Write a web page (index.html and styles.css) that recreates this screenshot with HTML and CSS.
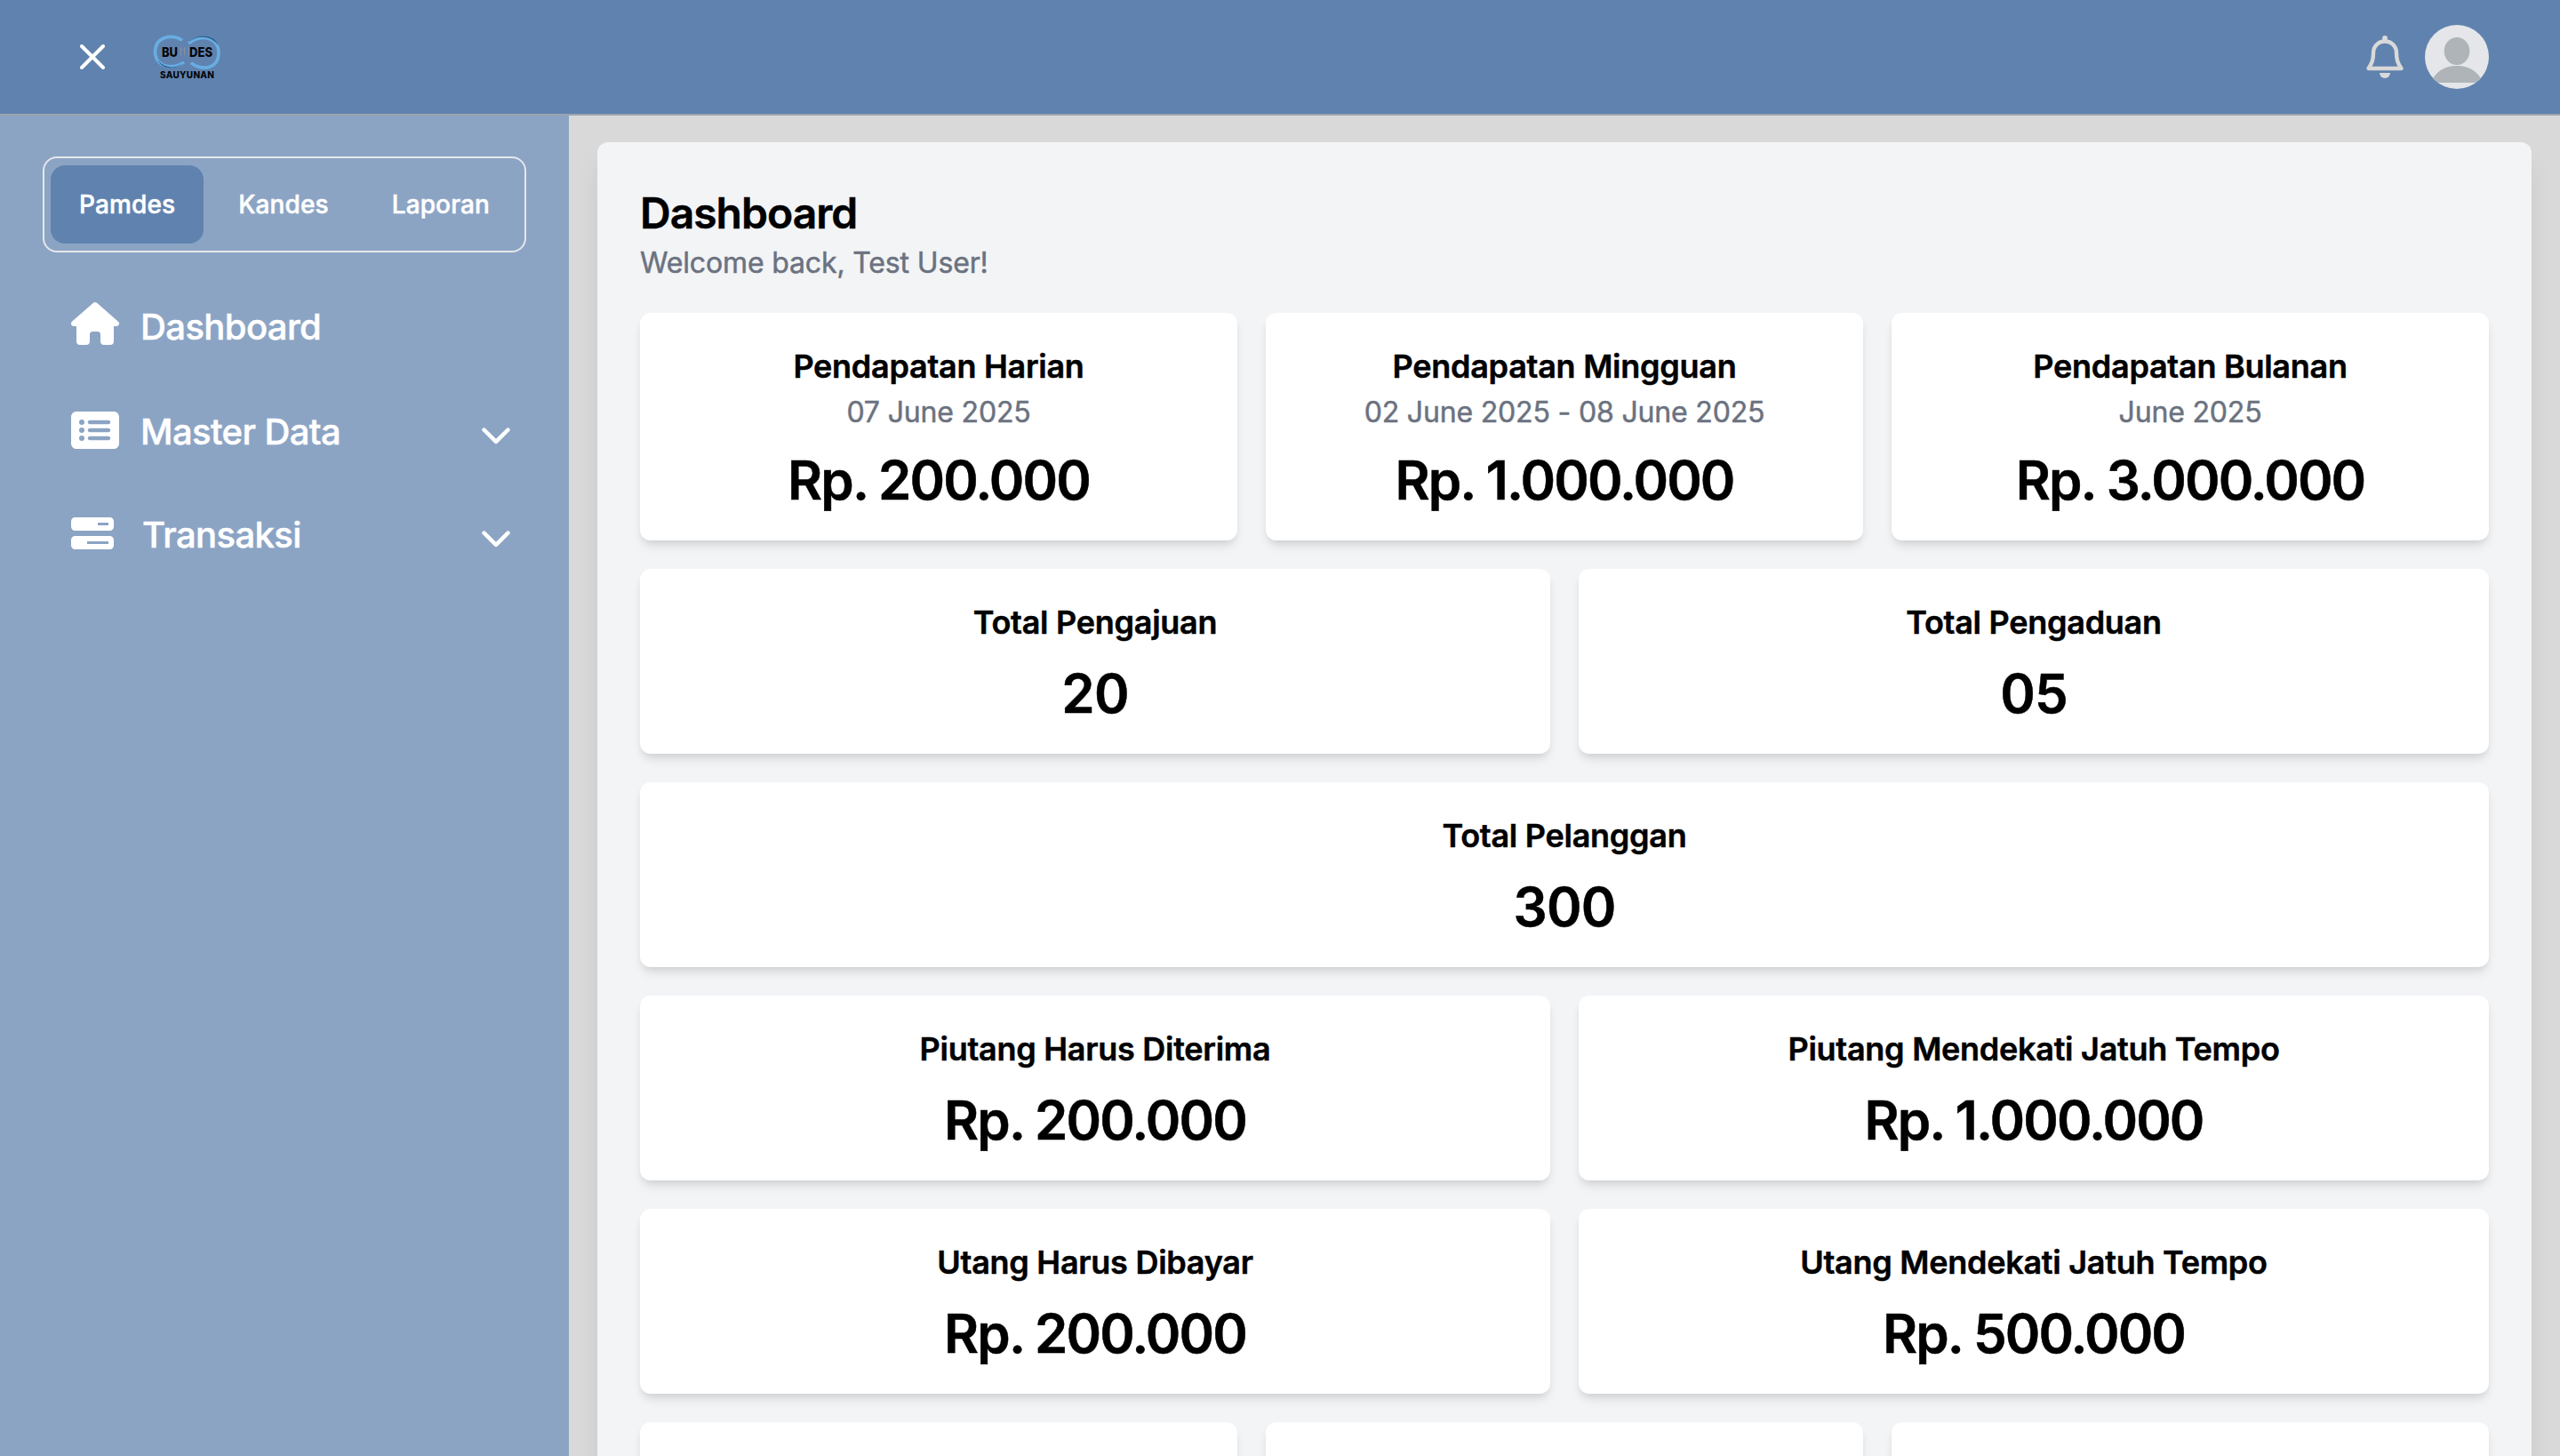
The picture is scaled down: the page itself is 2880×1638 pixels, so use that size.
FILE: index.html
```html
<!DOCTYPE html>
<html lang="id">
<head>
  <meta charset="UTF-8">
  <meta name="viewport" content="width=device-width, initial-scale=1.0">
  <title>Dashboard - Pamdes</title>
  <link rel="stylesheet" href="styles.css">
</head>
<body>
  <header class="navbar">
    <div class="navbar-left">
      <button class="close-button" aria-label="Close sidebar">
        <svg viewBox="0 0 28 28"><path d="M2 2l24 24M26 2L2 26"/></svg>
      </button>
      <svg class="logo" viewBox="0 -2.4 80 54">
        <path d="M33 6C24-1 2.500 0 2.500 19c0 10 8 16.500 17 16.500 7 0 12-2.500 15.500-5" fill="none" stroke="#69ade2" stroke-width="3.600"/>
        <path d="M5 27c6 10 21 13 31.500 2C28 39 11 41 5 27z" fill="#2c608f"/>
        <path d="M43 31c9 9 31 9 31-12 0-9-8-16-17-16-7 0-12 2.500-17 6.500" fill="none" stroke="#69ade2" stroke-width="3.600"/>
        <path d="M40 8C48-1 68-3 74 12 65 0 50 0 40 8z" fill="#2c608f"/>
        <path d="M31.500 14v9M35.500 14v9M40.500 14v9M30 14l3 3M37 14l-3 3M39 15l3 3" stroke="#8790a0" stroke-width="1" fill="none"/>
        <text class="logo-text" x="10" y="25" textLength="18" lengthAdjust="spacingAndGlyphs">BU</text>
        <text class="logo-text" x="41" y="25" textLength="26" lengthAdjust="spacingAndGlyphs">DES</text>
        <text class="logo-subtext" x="8" y="48.900" textLength="61">SAUYUNAN</text>
      </svg>
    </div>
    <div class="navbar-right">
      <svg class="bell" viewBox="0 0 48 48">
        <path d="M24 6.500c-7.500 0-13 5.500-13 13 0 8-1.500 11.500-5.500 17.500h37c-4-6-5.500-9.500-5.500-17.500 0-7.500-5.500-13-13-13z" fill="none" stroke="#d9d9d9" stroke-width="4.400" stroke-linejoin="round"/>
        <circle cx="24" cy="3" r="3" fill="#d9d9d9"/>
        <path d="M18 42h12a6 6 0 0 1-12 0z" fill="#d9d9d9"/>
      </svg>
      <svg class="avatar" viewBox="0 0 72 72">
        <clipPath id="avatar-clip"><circle cx="36" cy="36" r="36"/></clipPath>
        <g clip-path="url(#avatar-clip)">
          <rect width="72" height="72" fill="#e4e6e9"/>
          <ellipse cx="36" cy="29.500" rx="14.300" ry="15.500" fill="#aeb4b7"/>
          <path d="M7 65C11 53 22 46 36 46s25 7 29 19z" fill="#aeb4b7"/>
        </g>
      </svg>
    </div>
  </header>

  <div class="layout">
    <aside class="sidebar">
      <div class="tabs">
        <button class="tab active">Pamdes</button>
        <button class="tab">Kandes</button>
        <button class="tab">Laporan</button>
      </div>
      <nav class="menu">
        <a class="menu-item menu-home">
          <svg class="menu-icon" viewBox="0 0 576 512"><path d="M575.8 255.5c0 18-15 32.1-32 32.1h-32l.7 160.2c0 2.7-.2 5.400-.5 8.100V472c0 22.100-17.900 40-40 40H392c-22.100 0-40-17.900-40-40v-88c0-17.700-14.300-32-32-32h-64c-17.700 0-32 14.300-32 32v88c0 22.100-17.900 40-40 40h-80c-22.100 0-40-17.900-40-40V287.600H32c-18 0-32-14-32-32.100 0-9 3-17 10-24L266.400 8c7-7 15-8 22-8s15 2 21 7l255.400 224.500c8 7 12 15 11 24z"/></svg>
          <span>Dashboard</span>
        </a>
        <a class="menu-item">
          <svg class="menu-icon" viewBox="0 0 576 512"><path fill-rule="evenodd" d="M64 32h448c35.300 0 64 28.700 64 64v320c0 35.300-28.700 64-64 64H64c-35.300 0-64-28.700-64-64V96c0-35.300 28.700-64 64-64zm64 256a32 32 0 1 0 0-64 32 32 0 1 0 0 64zm32-128a32 32 0 1 0-64 0 32 32 0 1 0 64 0zm-32 224a32 32 0 1 0 0-64 32 32 0 1 0 0 64zm96-248c-13.300 0-24 10.700-24 24s10.700 24 24 24h224c13.300 0 24-10.700 24-24s-10.700-24-24-24zm0 96c-13.300 0-24 10.700-24 24s10.700 24 24 24h224c13.300 0 24-10.700 24-24s-10.700-24-24-24zm0 96c-13.300 0-24 10.700-24 24s10.700 24 24 24h224c13.300 0 24-10.700 24-24s-10.700-24-24-24z"/></svg>
          <span>Master Data</span>
          <svg class="chevron" viewBox="0 0 512 512"><path d="M233.400 406.600c12.500 12.500 32.800 12.500 45.300 0l192-192c12.500-12.500 12.500-32.800 0-45.300s-32.800-12.500-45.300 0L256 338.700 86.600 169.400c-12.500-12.500-32.800-12.500-45.300 0s-12.500 32.800 0 45.300l192 192z"/></svg>
        </a>
        <a class="menu-item">
          <svg class="menu-icon icon-square" viewBox="0 0 512 512"><path fill-rule="evenodd" d="M448 160H320v-32h128v32zM48 64C21.500 64 0 85.500 0 112v64c0 26.500 21.500 48 48 48h416c26.500 0 48-21.500 48-48v-64c0-26.500-21.500-48-48-48H48zm400 288v32H192v-32h256zM48 288c-26.500 0-48 21.500-48 48v64c0 26.500 21.500 48 48 48h416c26.500 0 48-21.500 48-48v-64c0-26.500-21.500-48-48-48H48z"/></svg>
          <span>Transaksi</span>
          <svg class="chevron" viewBox="0 0 512 512"><path d="M233.400 406.600c12.500 12.500 32.800 12.500 45.300 0l192-192c12.500-12.500 12.500-32.800 0-45.300s-32.800-12.500-45.300 0L256 338.700 86.600 169.400c-12.500-12.500-32.800-12.500-45.300 0s-12.500 32.800 0 45.300l192 192z"/></svg>
        </a>
      </nav>
    </aside>

    <main class="content">
      <div class="panel">
        <div class="panel-header">
          <h1>Dashboard</h1>
          <p>Welcome back, Test User!</p>
        </div>

        <div class="row">
          <div class="card">
            <h2>Pendapatan Harian</h2>
            <p class="date">07 June 2025</p>
            <p class="value">Rp. 200.000</p>
          </div>
          <div class="card">
            <h2>Pendapatan Mingguan</h2>
            <p class="date">02 June 2025 - 08 June 2025</p>
            <p class="value">Rp. 1.000.000</p>
          </div>
          <div class="card">
            <h2>Pendapatan Bulanan</h2>
            <p class="date">June 2025</p>
            <p class="value">Rp. 3.000.000</p>
          </div>
        </div>

        <div class="row">
          <div class="card">
            <h2>Total Pengajuan</h2>
            <p class="value count">20</p>
          </div>
          <div class="card">
            <h2>Total Pengaduan</h2>
            <p class="value count">05</p>
          </div>
        </div>

        <div class="row">
          <div class="card">
            <h2>Total Pelanggan</h2>
            <p class="value count">300</p>
          </div>
        </div>

        <div class="row">
          <div class="card">
            <h2>Piutang Harus Diterima</h2>
            <p class="value">Rp. 200.000</p>
          </div>
          <div class="card">
            <h2>Piutang Mendekati Jatuh Tempo</h2>
            <p class="value">Rp. 1.000.000</p>
          </div>
        </div>

        <div class="row">
          <div class="card">
            <h2>Utang Harus Dibayar</h2>
            <p class="value">Rp. 200.000</p>
          </div>
          <div class="card">
            <h2>Utang Mendekati Jatuh Tempo</h2>
            <p class="value">Rp. 500.000</p>
          </div>
        </div>

        <div class="row row-last">
          <div class="card"></div>
          <div class="card"></div>
          <div class="card"></div>
        </div>
      </div>
    </main>
  </div>
</body>
</html>
```

FILE: styles.css
```css
:root {
  --primary: #6082ae;
  --sidebar: #8ca4c4;
  --page-bg: #d9d9d9;
  --panel-bg: #f3f4f6;
  --muted: #6b7280;
}

* {
  box-sizing: border-box;
  margin: 0;
  padding: 0;
}

body {
  font-family: Inter, "Liberation Sans", sans-serif;
  height: 1638px;
  display: flex;
  flex-direction: column;
  background-color: var(--page-bg);
  color: #000;
  overflow: hidden;
  -webkit-text-stroke: 0.5px;
}

button {
  background: none;
  border: none;
  font-family: inherit;
}

svg {
  display: block;
  flex-shrink: 0;
}

/* top bar */
.navbar {
  height: 130px;
  flex-shrink: 0;
  display: flex;
  align-items: center;
  justify-content: space-between;
  padding: 0 80px 0 90px;
  background-color: var(--primary);
  border-bottom: 2px solid #9ca3af;
  -webkit-text-stroke: 0;
}

.navbar-left {
  display: flex;
  align-items: center;
  gap: 54px;
}

.close-button svg {
  width: 28px;
  height: 28px;
  fill: none;
  stroke: #fff;
  stroke-width: 4;
  stroke-linecap: round;
}

.logo {
  width: 80px;
  height: 54px;
}

.logo-text {
  font-family: Inter, sans-serif;
  font-size: 14.500px;
  font-weight: 800;
  fill: #050608;
}

.logo-subtext {
  font-family: Inter, sans-serif;
  font-size: 10px;
  font-weight: 800;
  fill: #050608;
}

.navbar-right {
  display: flex;
  align-items: center;
  gap: 21px;
}

.bell {
  width: 48px;
  height: 48px;
  overflow: visible;
}

.avatar {
  width: 72px;
  height: 72px;
}

.layout {
  display: flex;
  flex: 1;
  min-height: 0;
}

/* sidebar */
.sidebar {
  width: 640px;
  flex-shrink: 0;
  padding: 46px 48px;
  background-color: var(--sidebar);
  color: #fff;
}

.tabs {
  width: 544px;
  height: 108px;
  display: flex;
  align-items: center;
  justify-content: space-evenly;
  border: 2px solid #e5e7eb;
  border-radius: 16px;
}

.tab {
  height: 88px;
  padding: 0 32px;
  border-radius: 16px;
  color: #fff;
  font-size: 28px;
  font-weight: 500;
  letter-spacing: 0.1px;
  -webkit-text-stroke: 0.5px;
}

.tab.active {
  background-color: var(--primary);
}

.menu {
  padding: 24px 16px 0 32px;
}

.menu-item {
  height: 116px;
  display: flex;
  align-items: center;
  gap: 24px;
  font-size: 40px;
  font-weight: 500;
  letter-spacing: -0.6px;
}

.menu-item span {
  padding-top: 2px;
}

.menu-home {
  margin-bottom: 2px;
}

.menu-home .menu-icon {
  margin-bottom: 4px;
}

.menu-icon {
  width: 54px;
  height: 48px;
  fill: #fff;
}

.menu-icon.icon-square {
  width: 48px;
  margin-right: 8px;
}

.chevron {
  width: 36px;
  height: 36px;
  margin-top: 8px;
  margin-left: auto;
  fill: #fff;
}

/* content */
.content {
  flex: 1;
  padding: 30px 32px 0;
  overflow: hidden;
}

.panel {
  display: flex;
  flex-direction: column;
  gap: 32px;
  padding: 48px;
  background-color: var(--panel-bg);
  border-radius: 12px;
  box-shadow: 0 20px 30px -6px rgba(0, 0, 0, 0.1), 0 8px 12px -8px rgba(0, 0, 0, 0.1);
}

.panel-header h1 {
  font-size: 48px;
  line-height: 64px;
  font-weight: 600;
  letter-spacing: -1px;
}

.panel-header p {
  font-size: 32px;
  line-height: 48px;
  letter-spacing: -0.15px;
  color: var(--muted);
}

.row {
  display: flex;
  gap: 32px;
}

.row-last {
  height: 256px;
}

.card {
  flex: 1 1 0;
  padding: 32px;
  text-align: center;
  background-color: #fff;
  border-radius: 12px;
  box-shadow: 0 8px 12px -2px rgba(0, 0, 0, 0.1), 0 4px 8px -4px rgba(0, 0, 0, 0.1);
}

.card h2 {
  font-size: 36px;
  line-height: 56px;
  font-weight: 600;
  letter-spacing: -0.27px;
}

.card .date {
  font-size: 32px;
  line-height: 48px;
  letter-spacing: -0.17px;
  color: var(--muted);
}

.card .value {
  margin-top: 16px;
  font-size: 60px;
  line-height: 72px;
  font-weight: 600;
  letter-spacing: -1.9px;
}

.card .value.count {
  letter-spacing: -0.8px;
}
```
